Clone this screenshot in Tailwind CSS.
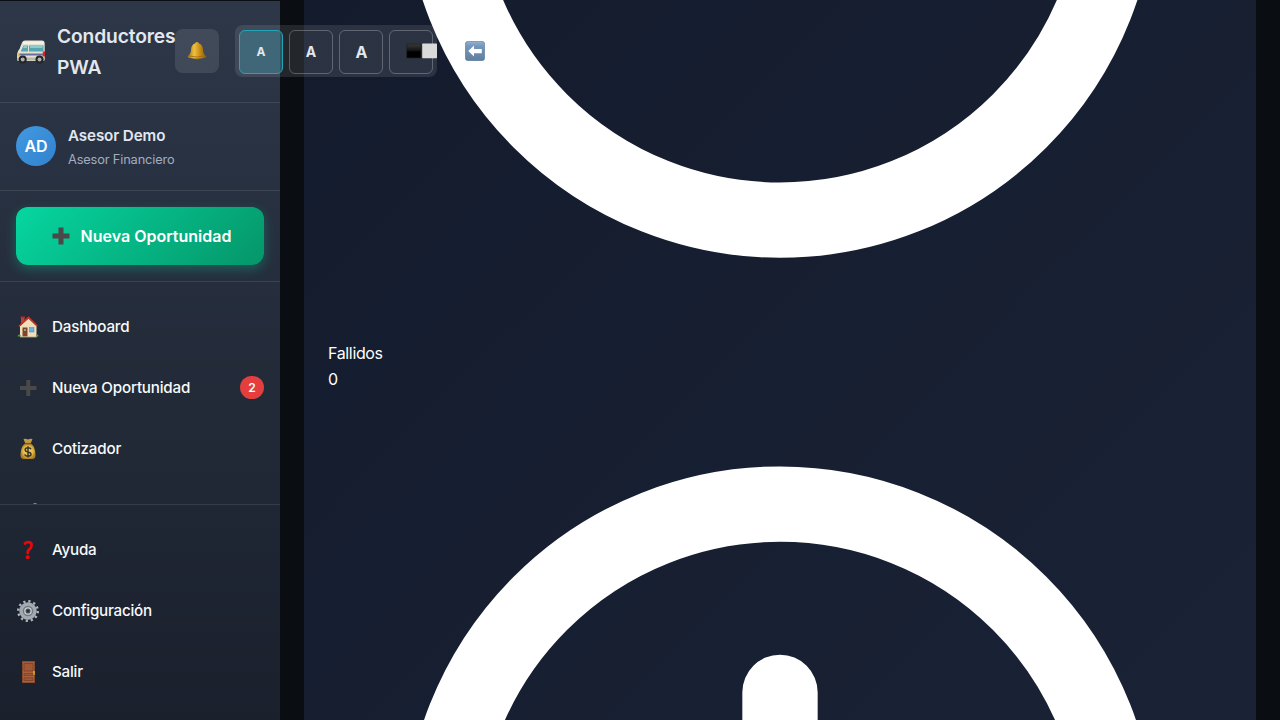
<!DOCTYPE html>
<html lang="es">
<head>
<meta charset="utf-8">
<title>Conductores PWA</title>
<script src="https://cdn.jsdelivr.net/npm/@tailwindcss/browser@4"></script>
</head>
<body class="h-[720px] w-[1280px] overflow-hidden bg-[#0a0e12] font-['Inter',sans-serif] text-base leading-[25.6px] text-white">
<div class="flex h-[720px]">
  <aside class="relative z-10 mt-px flex h-[719px] w-[280px] shrink-0 flex-col bg-linear-to-b from-[#2d3748] to-[#1a202c]">
    <header class="flex h-[102px] shrink-0 items-center border-b border-white/10 pb-px pl-4">
      <svg class="mt-0.5 h-[30px] w-[30px] shrink-0" viewBox="0 0 30 30">
        <path d="M3.5 12 6 5.5Q7 3.5 9 3.5H26Q28.600 3.5 28.700 6.500V22Q28.700 24 26.500 24H3Q1 24 1 21V17.500Q1.300 14 3.500 12Z" fill="#e6e2d0"/>
        <path d="M7.500 4.500H27.500V7H7Z" fill="#f5f2e5"/>
        <path d="M5 13.800 7.500 8.500H12V14.500H5ZM13 8.500H27.500V14.500H13Z" fill="#56a5b2"/>
        <path d="M8 9H11V11H7ZM14 9H26.500V11H14Z" fill="#8dcbd3"/>
        <path d="M1.500 16.500H28.500V18.500H2Z" fill="#6670a0"/>
        <path d="M1 20.500H28.500V23.500H1Z" fill="#bab8ad"/>
        <path d="M1 16h2.500v3.500H1z" fill="#f4c24a"/><path d="M26.800 14.500h2.200v5h-2.200z" fill="#df2020"/>
        <circle cx="6.700" cy="22.500" r="4" fill="#222426"/><circle cx="6.700" cy="22.500" r="2" fill="#aeb0b2"/>
        <circle cx="23.500" cy="22.500" r="4" fill="#222426"/><circle cx="23.500" cy="22.500" r="2" fill="#aeb0b2"/>
      </svg>
      <h1 class="ml-[11px] w-[118px] shrink-0 pt-px text-[19.2px] leading-[30.7px] font-semibold tracking-[-0.12px] text-[#e2e8f0]">Conductores PWA</h1>
      <button class="grid h-11 w-11 shrink-0 place-items-center rounded-lg bg-white/10">
        <svg class="h-5 w-5" viewBox="0 0 20 20">
          <defs><linearGradient id="gold"><stop stop-color="#a96e0b"/><stop offset=".35" stop-color="#efc03f"/><stop offset=".65" stop-color="#c98e16"/><stop offset="1" stop-color="#8b5807"/></linearGradient></defs>
          <ellipse cx="10" cy="17" rx="2.500" ry="1.800" fill="#8b5707"/>
          <path d="M10 1Q11.800 1 12 2.500Q15.800 3.500 16 9Q16.200 13 19.300 15.200Q19.500 16.800 17 17Q10 18 3 17Q.5 16.800 .7 15.200Q3.800 13 4 9Q4.200 3.500 8 2.500Q8.200 1 10 1Z" fill="url(#gold)"/>
          <path d="M2 15Q10 17 18 15" fill="none" stroke="#9e680b" stroke-width=".8"/>
        </svg>
      </button>
      <div class="ml-4 flex shrink-0 gap-1.5 rounded-lg bg-white/10 px-1 pt-[5px] pb-[3px] text-[#e2e8f0]">
        <button class="h-11 w-11 rounded-md border border-[#22a5b8] bg-[#3f8b9d]/45 text-xs font-bold">A</button>
        <button class="h-11 w-11 rounded-md border border-white/25 text-sm font-bold">A</button>
        <button class="h-11 w-11 rounded-md border border-white/25 pb-px pl-px text-base font-bold">A</button>
        <button class="flex h-11 w-11 items-center rounded-md border border-white/25 pb-[3px] pl-4">
          <svg class="h-4 w-8 shrink-0" viewBox="0 0 32 16"><defs><linearGradient id="ink" x2="0" y2="1"><stop stop-color="#3a3a3a"/><stop offset=".5" stop-color="#111"/><stop offset=".55" stop-color="#000"/></linearGradient></defs><rect x=".7" y="1" width="14.300" height="14" rx=".5" fill="url(#ink)" stroke="#202124" stroke-width=".7"/><rect x="16.200" y=".5" width="14.800" height="14.800" rx=".7" fill="#dadada"/></svg>
        </button>
      </div>
      <button class="ml-4 grid h-11 w-11 shrink-0 place-items-center rounded-lg bg-white/10">
        <svg class="h-5 w-5" viewBox="0 0 20 20"><defs><linearGradient id="steel" x2="0" y2="1"><stop stop-color="#94b3d0"/><stop offset=".25" stop-color="#7497bb"/><stop offset="1" stop-color="#607f9f"/></linearGradient></defs><rect x=".3" y=".3" width="19.400" height="19.400" rx="3" fill="url(#steel)" stroke="#587490" stroke-width=".6"/><path d="M3.200 10 9 4.500V8H16.800V12.200H9V15.600Z" fill="#fff"/></svg>
      </button>
    </header>

    <section class="flex h-[88px] shrink-0 items-center gap-3 border-b border-white/10 px-4 pb-px">
      <div class="grid h-10 w-10 place-items-center rounded-full bg-linear-to-br from-[#4299e1] to-[#3182ce] pt-px font-semibold tracking-[-0.2px]">AD</div>
      <div class="pt-[4px]">
        <p class="text-[15.2px] leading-[24px] font-semibold tracking-[-0.12px] text-[#e2e8f0]">Asesor Demo</p>
        <p class="text-[12.8px] leading-[24px] tracking-[-0.15px] text-[#a0aec0]">Asesor Financiero</p>
      </div>
    </section>

    <div class="h-[91px] shrink-0 border-b border-white/10 px-4 pt-4">
      <button class="flex h-[58px] w-full items-center justify-center gap-[11px] rounded-xl bg-linear-[135deg] from-[#06d6a0] to-[#059669] pl-[3px] font-semibold shadow-[0_4px_12px_rgba(6,214,160,0.3)]">
        <svg class="h-[18px] w-[18px]" viewBox="0 0 18 18"><path d="M6.500 .5h5v6h6v5h-6v6h-5v-6h-6v-5h6z" fill="#494949"/></svg>
        <span class="pt-[2px]">Nueva Oportunidad</span>
      </button>
    </div>

    <nav class="min-h-0 flex-1 overflow-hidden pt-[14px] text-[15.2px] font-medium tracking-[-0.2px] text-[#f7fafc]">
      <a class="flex h-[61px] items-center gap-3 px-4">
        <svg class="h-6 w-6" viewBox="0 0 24 24">
          <path d="M5 2H8.500V8H5Z" fill="#b4473c"/><path d="M4.500 1.500h4.500v1.500h-4.500z" fill="#c9241b"/>
          <path d="M4 11 12.500 3.500 20.500 11V22H4Z" fill="#eee0bb"/>
          <path d="M2.800 11.500 12.500 2.500 21.200 11" fill="none" stroke="#cf3124" stroke-width="1.700"/>
          <rect x="6.500" y="12.500" width="5" height="9" fill="#824329"/><circle cx="9" cy="15" r="1" fill="#97bad0"/>
          <rect x="13.500" y="12.500" width="4.500" height="4.500" fill="#6ab2e5" stroke="#5686a8" stroke-width=".5"/>
          <path d="M4 22h17" stroke="#aaa68e" stroke-width=".8"/><path d="M1.800 20.500q1.500-2 3 0v1h-3zM20 20.500q1-2 2.500 0v1H20z" fill="#51a22f"/>
        </svg>
        <span>Dashboard</span>
      </a>
      <a class="flex h-[61px] items-center gap-3 px-4">
        <svg class="h-6 w-6" viewBox="0 0 24 24"><path d="M10.300 4h4v6H20.500v4H14.300v6h-4v-6H4V10h6.300z" fill="#494949"/></svg>
        <span>Nueva Oportunidad</span>
        <span class="ml-auto grid h-[23px] w-6 place-items-center rounded-full bg-[#e53e3e] text-xs leading-none font-semibold text-white">2</span>
      </a>
      <a class="flex h-[61px] items-center gap-3 px-4">
        <svg class="h-6 w-6" viewBox="0 0 24 24">
          <defs><radialGradient id="sack"><stop stop-color="#f6d66a"/><stop offset=".65" stop-color="#e2ba49"/><stop offset="1" stop-color="#b27e23"/></radialGradient></defs>
          <path d="M7.500 2Q10 1.500 12 2.500Q14 1.300 16.500 2L14.500 7H9.500Z" fill="#c39a45"/>
          <path d="M9 6.500H15Q19.500 10 19.500 18Q19.500 22 16 22H8Q4.500 22 4.500 18Q4.500 10 9 6.500Z" fill="url(#sack)"/>
          <path d="M9 6.600H15" stroke="#8b541e" stroke-width="1.500"/>
          <path d="M15 12.200Q14.500 10.700 12 10.700Q9.200 10.700 9.200 12.800Q9.200 14.500 12 15Q15 15.600 15 17.300Q15 19.200 12 19.200Q9.300 19.200 8.800 17.400M12 9.300V20.600" fill="none" stroke="#3b3528" stroke-width="1.500"/>
        </svg>
        <span>Cotizador</span>
      </a>
      <a class="flex h-[61px] items-start gap-3 px-4 pt-[22px]">
        <svg class="h-6 w-6" viewBox="0 0 24 24"><path d="M17.500 2h3v1h2v2h-5v-2z" fill="#4a9ca2"/></svg>
      </a>
    </nav>

    <footer class="h-[216px] shrink-0 border-t border-white/10 pt-[14px] text-[15.2px] font-medium tracking-[-0.23px] text-[#f7fafc]">
      <a class="flex h-[61px] items-center gap-3 px-4">
        <svg class="h-6 w-6" viewBox="0 0 24 24"><path d="M9 5.500Q10 3.900 12.700 4.100Q15.900 4.400 15.500 7.800Q15.200 10 13 11.600Q11.600 12.800 11.700 15" fill="none" stroke="#e80808" stroke-width="2.800" stroke-linecap="round"/><circle cx="11.700" cy="19.200" r="2" fill="#e80808"/></svg>
        <span>Ayuda</span>
      </a>
      <a class="flex h-[61px] items-center gap-3 px-4">
        <svg class="h-6 w-6" viewBox="0 0 24 24">
          <circle cx="12" cy="12" r="9.800" fill="none" stroke="#aeb6bc" stroke-width="2.400" stroke-dasharray="2.200 2.936"/>
          <circle cx="12" cy="12" r="7" fill="#737a82" stroke="#a3abb1" stroke-width="3.400"/>
          <circle cx="12" cy="12" r="3.200" fill="#4a545e" stroke="#cbd2d7" stroke-width="1.300"/><circle cx="12" cy="12" r="1.300" fill="#252d38"/>
        </svg>
        <span>Configuración</span>
      </a>
      <a class="flex h-[61px] items-center gap-3 px-4">
        <svg class="h-6 w-6" viewBox="0 0 24 24">
          <rect x="6" y="1" width="13" height="22" fill="#85492c"/><rect x="7" y="2.200" width="11" height="20" fill="#a86240"/>
          <path d="M8 3.500H17V11H8ZM8 13.500H17V15.500H8ZM8 17.800H17V20.500H8Z" fill="#a05836" stroke="#753d25" stroke-width=".7"/>
          <path d="M17 11h2v3.700h-2z" fill="#c99b25"/>
        </svg>
        <span>Salir</span>
      </a>
    </footer>
  </aside>

  <main class="min-w-0 flex-1 overflow-hidden px-6">
    <section class="flex h-[720px] flex-col overflow-hidden bg-linear-[135deg] from-[#131b2d] to-[#1a2335] px-6">
      <svg class="mt-[-570.6px] h-[904px] w-[904px] shrink-0" viewBox="0 0 24 24" fill="none" stroke="currentColor" stroke-width="2" stroke-linecap="round" stroke-linejoin="round"><path d="M10 14l2-2m0 0l2-2m-2 2l-2-2m2 2l2 2m7-2a9 9 0 11-18 0 9 9 0 0118 0z"/></svg>
      <div class="mt-[7.600px] shrink-0 tracking-[-0.35px]">Fallidos</div>
      <div class="shrink-0 tracking-[-0.3px]">0</div>
      <svg class="mt-[-1.2px] h-[904px] w-[904px] shrink-0" viewBox="0 0 24 24" fill="none" stroke="currentColor" stroke-width="2" stroke-linecap="round" stroke-linejoin="round"><path d="M12 8v4m0 4h.01M21 12a9 9 0 11-18 0 9 9 0 0118 0z"/></svg>
    </section>
  </main>
</div>
</body>
</html>
